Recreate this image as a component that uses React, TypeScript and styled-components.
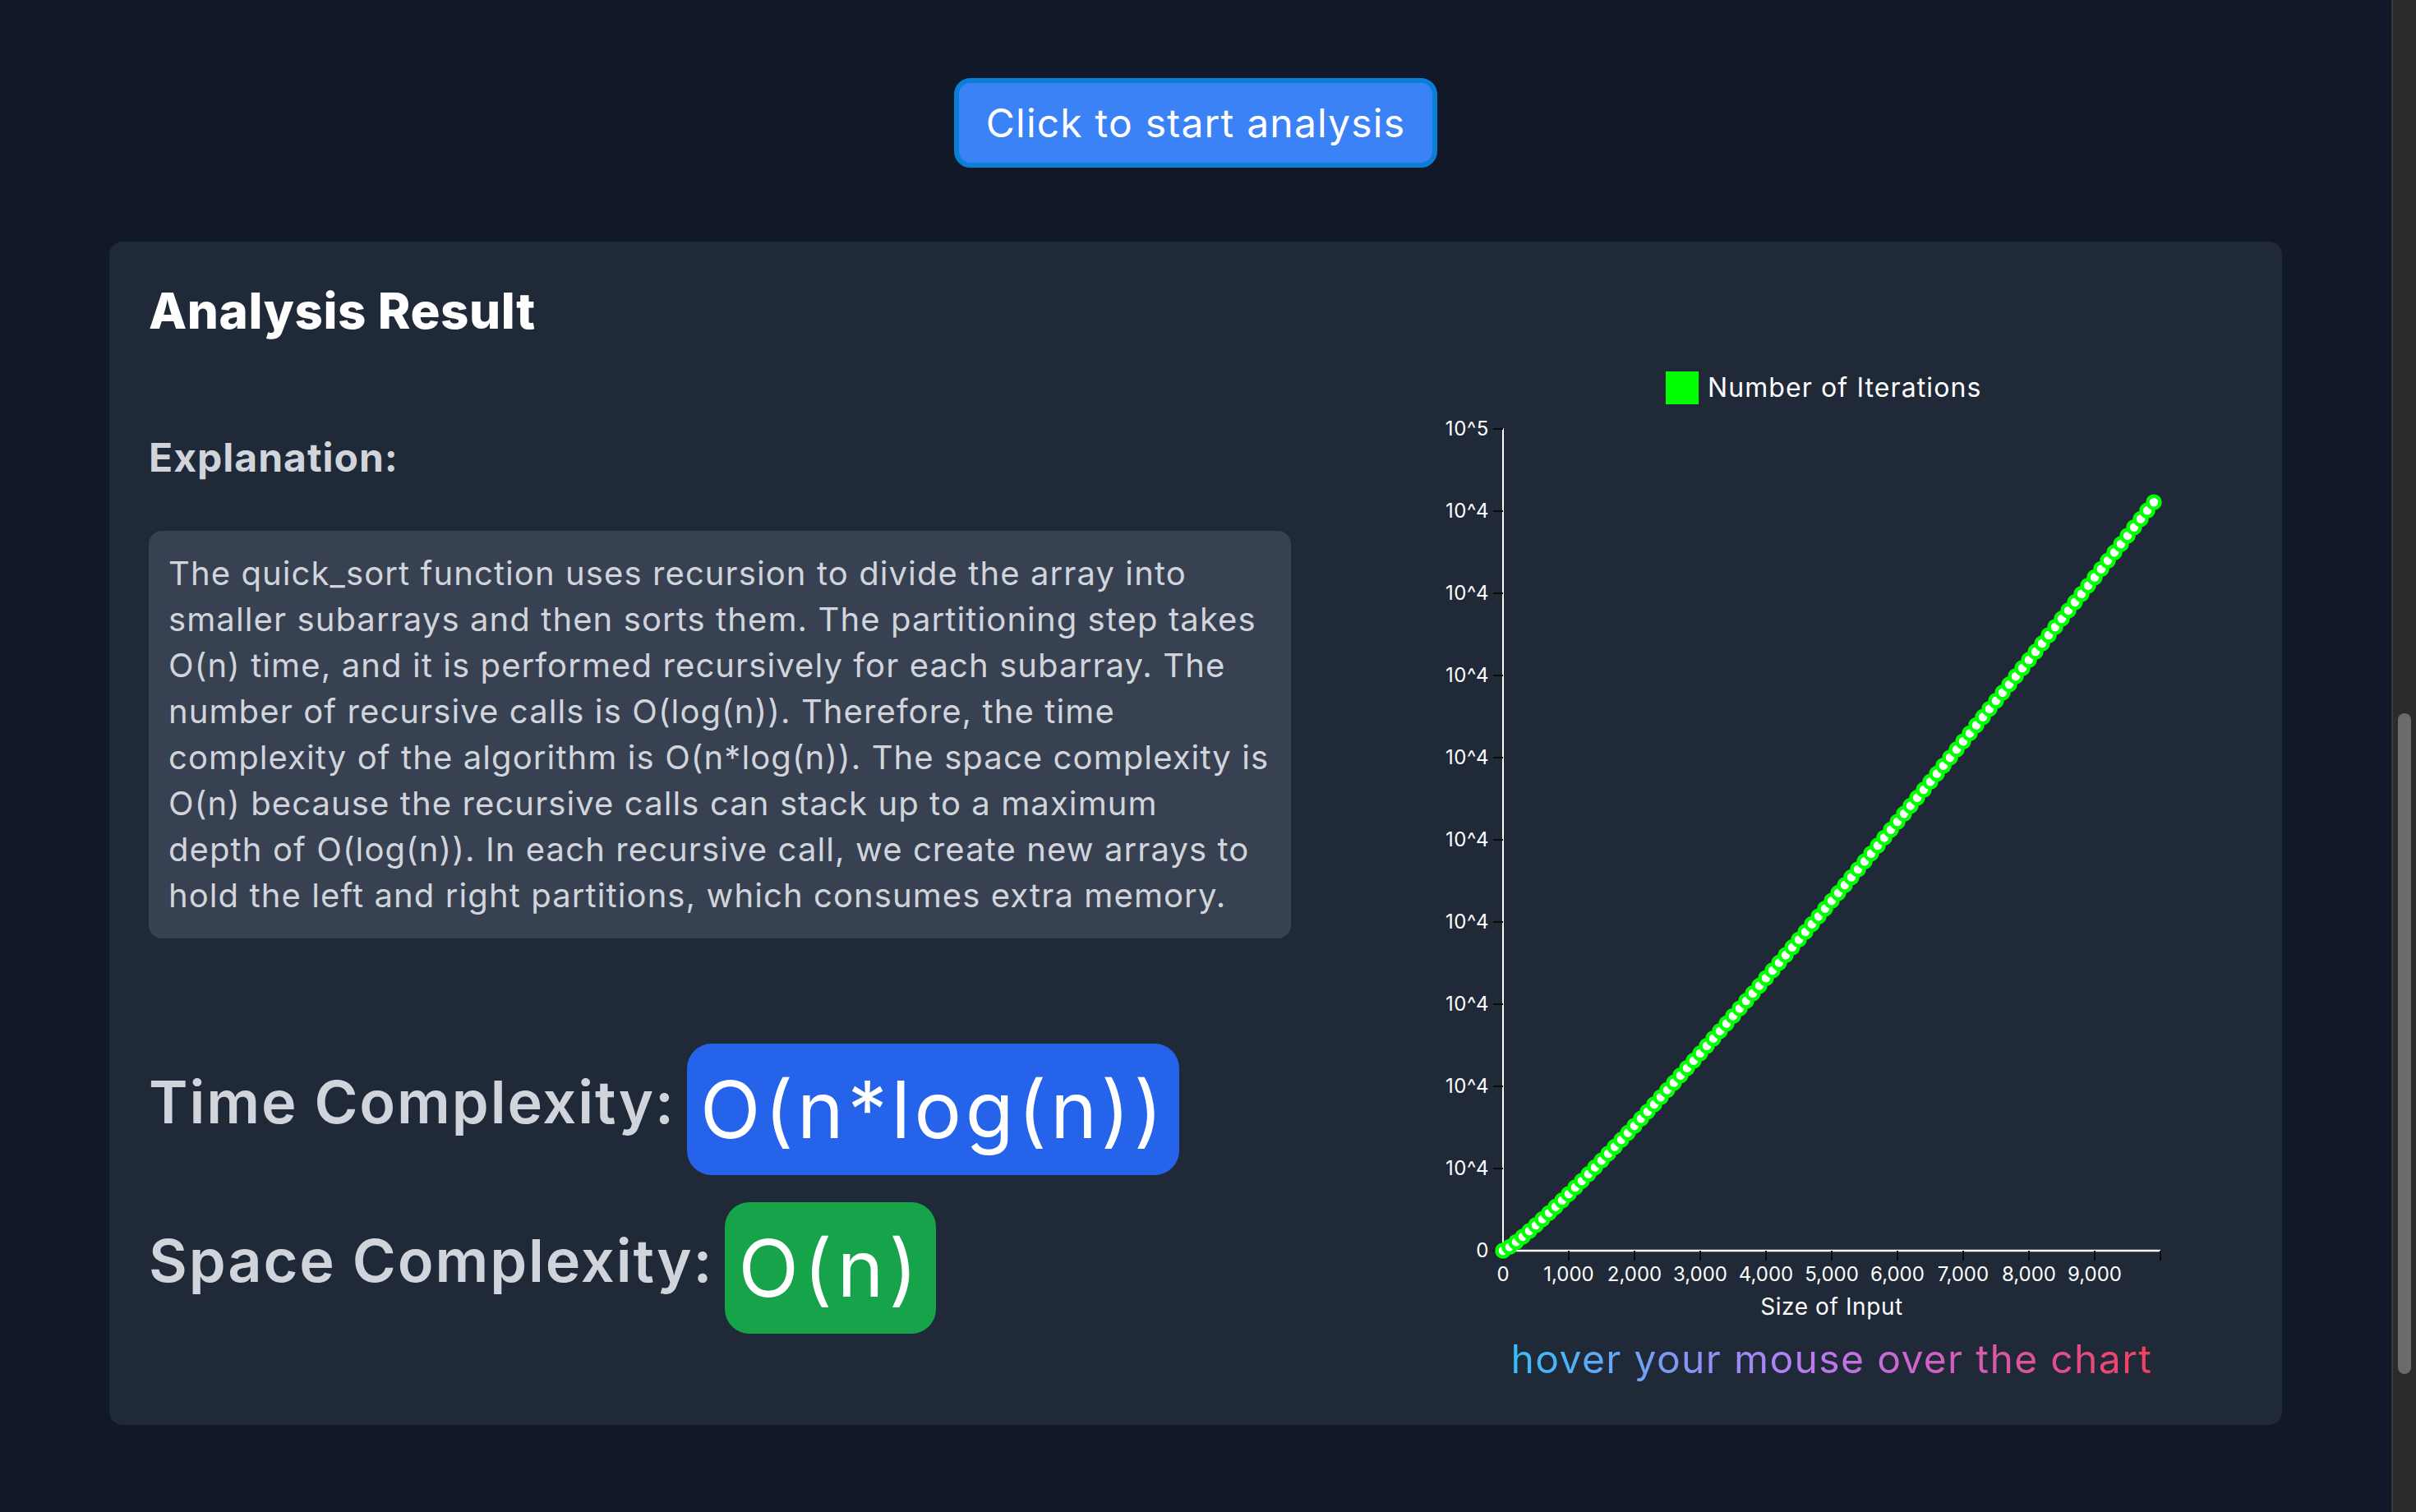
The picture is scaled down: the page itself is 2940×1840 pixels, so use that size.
import React from "react";
import styled, { createGlobalStyle } from "styled-components";

const GlobalStyle = createGlobalStyle`
  html, body {
    margin: 0;
    padding: 0;
    background: #111827;
    overflow: hidden;
  }
  body {
    font-family: "Inter", "Noto Sans", sans-serif;
  }
  * {
    box-sizing: border-box;
  }
`;

const Screen = styled.div`
  display: flex;
  width: 2940px;
  height: 1840px;
  background: #111827;
`;

const Page = styled.main`
  flex: 1;
  display: flex;
  flex-direction: column;
  padding: 95px 133px 0;
`;

const ButtonRow = styled.div`
  display: flex;
  justify-content: center;
`;

const StartButton = styled.button`
  height: 109px;
  padding: 0 33px;
  border: 6px solid #0a7fd6;
  border-radius: 20px;
  background: #3b82f6;
  color: #ffffff;
  font-family: inherit;
  font-size: 48px;
  line-height: 64px;
  letter-spacing: 1.2px;
  cursor: pointer;
`;

const Panel = styled.section`
  margin-top: 90px;
  padding: 48px;
  background: #1f2937;
  border-radius: 16px;
`;

const Title = styled.h2`
  margin: 0;
  font-size: 60px;
  line-height: 72px;
  font-weight: 800;
  letter-spacing: 0.6px;
  color: #ffffff;
`;

const Body = styled.div`
  margin-top: 26px;
  display: flex;
  justify-content: space-between;
  align-items: flex-start;
`;

const LeftColumn = styled.div`
  width: 1390px;
  margin-top: 85px;
  display: flex;
  flex-direction: column;
  align-items: flex-start;
`;

const SectionLabel = styled.h3`
  margin: 0;
  font-size: 48px;
  line-height: 64px;
  font-weight: 700;
  letter-spacing: 1px;
  color: #d1d5db;
`;

const ExplanationBox = styled.p`
  width: 100%;
  margin: 57px 0 0;
  padding: 24px;
  background: #374151;
  border-radius: 16px;
  color: #d1d5db;
  font-size: 40px;
  line-height: 56px;
  letter-spacing: 1.1px;
  white-space: pre-line;
`;

const ComplexityRow = styled.div<{ $offset: number }>`
  display: flex;
  align-items: center;
  gap: 14px;
  margin-top: ${(p) => p.$offset}px;
`;

const ComplexityLabel = styled.span`
  padding-bottom: 18px;
  font-size: 72px;
  line-height: 80px;
  font-weight: 600;
  letter-spacing: 1.9px;
  color: #d1d5db;
`;

const Badge = styled.span<{ $tone: "blue" | "green" }>`
  padding: 32px 16px;
  border-radius: 30px;
  background: ${(p) => (p.$tone === "blue" ? "#2563eb" : "#16a34a")};
  color: #ffffff;
  font-size: 96px;
  line-height: 96px;
  font-weight: 400;
  letter-spacing: ${(p) => (p.$tone === "blue" ? 4.8 : 6)}px;
`;

const RightColumn = styled.div`
  width: 1000px;
  display: flex;
  flex-direction: column;
  align-items: center;
`;

const ChartSvg = styled.svg`
  display: block;
  font-family: "Inter", "Noto Sans", sans-serif;
`;

const Hint = styled.span`
  display: inline-block;
  font-size: 48px;
  line-height: 64px;
  letter-spacing: 1.35px;
  background: linear-gradient(90deg, #38bdf8, #b77ef3 45%, #d062c8 65%, #f43f5e);
  -webkit-background-clip: text;
  background-clip: text;
  color: transparent;
`;

const ScrollTrack = styled.div`
  width: 30px;
  height: 100%;
  background: #2b2b2b;
  border-left: 2px solid #3a3a3a;
  padding: 868px 0 0 6px;
`;

const ScrollThumb = styled.div`
  width: 16px;
  height: 804px;
  border-radius: 8px;
  background: #6b6b6b;
`;

const EXPLANATION = [
  "The quick_sort function uses recursion to divide the array into",
  "smaller subarrays and then sorts them. The partitioning step takes",
  "O(n) time, and it is performed recursively for each subarray. The",
  "number of recursive calls is O(log(n)). Therefore, the time",
  "complexity of the algorithm is O(n*log(n)). The space complexity is",
  "O(n) because the recursive calls can stack up to a maximum",
  "depth of O(log(n)). In each recursive call, we create new arrays to",
  "hold the left and right partitions, which consumes extra memory.",
].join("\n");

const X0 = 100;
const Y0 = 1082;
const X_SCALE = 0.08;
const Y_SCALE = 0.01;

function ComplexityChart() {
  const points = Array.from({ length: 100 }, (_, i) => {
    const n = i * 100;
    const v = n === 0 ? 0 : n * Math.log(n);
    return [X0 + n * X_SCALE, Y0 - v * Y_SCALE];
  });
  const yTicks = Array.from({ length: 11 }, (_, i) => i);
  const xTicks = Array.from({ length: 11 }, (_, i) => i);
  return (
    <ChartSvg width={1000} height={1182} viewBox="0 0 1000 1182">
      <rect x={298} y={12} width={40} height={40} fill="#00ff00" />
      <text x={349} y={43} fontSize={32} fill="#ffffff" letterSpacing={1.1}>
        Number of Iterations
      </text>

      <line x1={X0} y1={81} x2={X0} y2={Y0} stroke="#ffffff" strokeWidth={2} />
      {yTicks.map((i) => {
        const y = Y0 - i * 100;
        const label = i === 0 ? "0" : i === 10 ? "10^5" : "10^4";
        return (
          <g key={`y${i}`}>
            <line x1={88} y1={y} x2={X0} y2={y} stroke="#0b0b0b" strokeWidth={2} />
            <text x={83} y={y + 8} fontSize={24} fill="#ffffff" textAnchor="end" letterSpacing={0.6}>
              {label}
            </text>
          </g>
        );
      })}

      <line x1={X0} y1={Y0} x2={900} y2={Y0} stroke="#ffffff" strokeWidth={2.5} />
      {xTicks.map((i) => {
        const x = X0 + i * 80;
        return (
          <g key={`x${i}`}>
            <line x1={x} y1={Y0} x2={x} y2={Y0 + 12} stroke="#0b0b0b" strokeWidth={2} />
            {i < 10 && (
              <text x={x} y={1119} fontSize={24} fill="#ffffff" textAnchor="middle">
                {(i * 1000).toLocaleString("en-US")}
              </text>
            )}
          </g>
        );
      })}
      <text x={500} y={1160} fontSize={28} fill="#ffffff" textAnchor="middle" letterSpacing={0.6}>
        Size of Input
      </text>

      <polyline
        points={points.map((p) => p.join(",")).join(" ")}
        fill="none"
        stroke="#00ff00"
        strokeWidth={3}
      />
      {points.map(([cx, cy], i) => (
        <circle key={i} cx={cx} cy={cy} r={7.5} fill="#ffffff" stroke="#00ff00" strokeWidth={4.5} />
      ))}
    </ChartSvg>
  );
}

export default function App() {
  return (
    <>
      <GlobalStyle />
      <Screen>
        <Page>
          <ButtonRow>
            <StartButton>Click to start analysis</StartButton>
          </ButtonRow>
          <Panel>
            <Title>Analysis Result</Title>
            <Body>
              <LeftColumn>
                <SectionLabel>Explanation:</SectionLabel>
                <ExplanationBox>{EXPLANATION}</ExplanationBox>
                <ComplexityRow $offset={128}>
                  <ComplexityLabel>Time Complexity:</ComplexityLabel>
                  <Badge $tone="blue">O(n*log(n))</Badge>
                </ComplexityRow>
                <ComplexityRow $offset={33}>
                  <ComplexityLabel>Space Complexity:</ComplexityLabel>
                  <Badge $tone="green">O(n)</Badge>
                </ComplexityRow>
              </LeftColumn>
              <RightColumn>
                <ComplexityChart />
                <Hint>hover your mouse over the chart</Hint>
              </RightColumn>
            </Body>
          </Panel>
        </Page>
        <ScrollTrack>
          <ScrollThumb />
        </ScrollTrack>
      </Screen>
    </>
  );
}
